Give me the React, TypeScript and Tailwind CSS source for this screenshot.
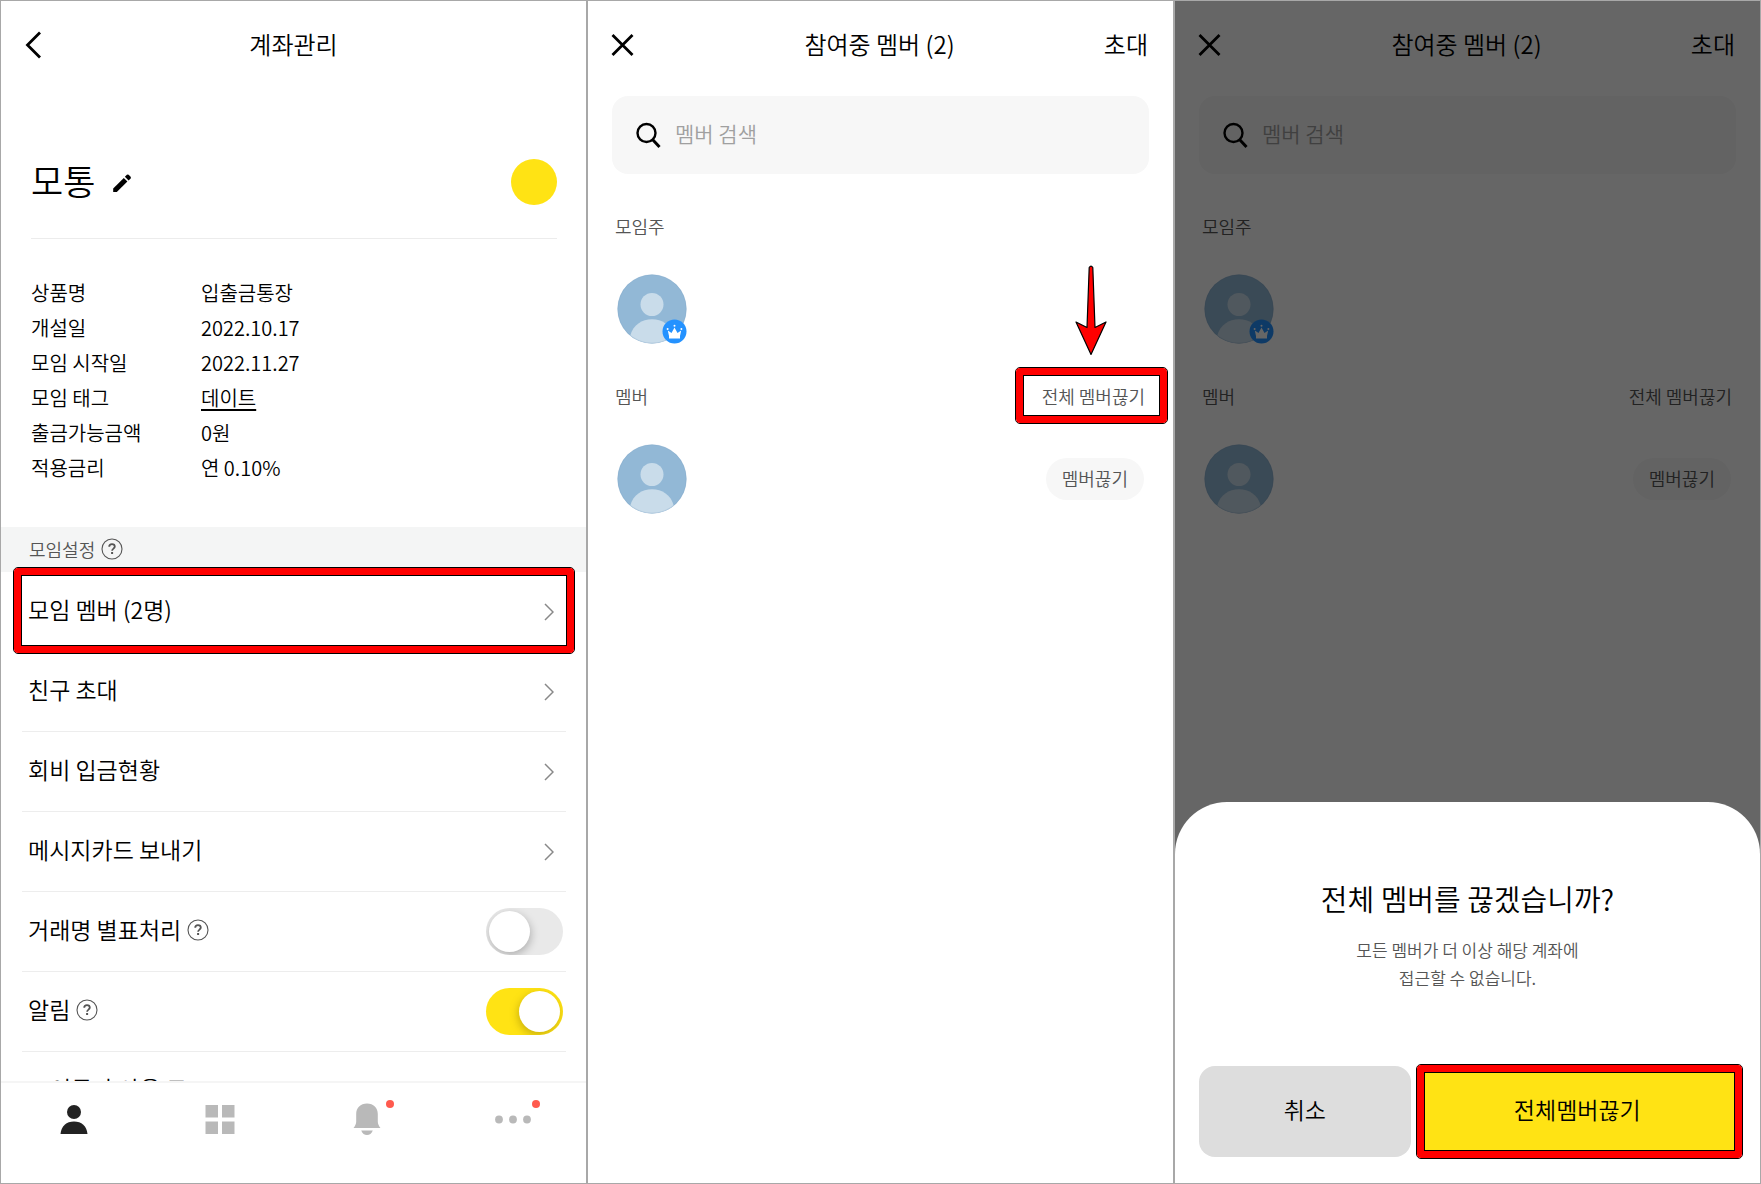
import React, { useState } from 'react';
import clsx from 'clsx';

const details = [
  { label: '상품명', value: '입출금통장' },
  { label: '개설일', value: '2022.10.17' },
  { label: '모임 시작일', value: '2022.11.27' },
  { label: '모임 태그', value: '데이트', link: '#tag' },
  { label: '출금가능금액', value: '0원' },
  { label: '적용금리', value: '연 0.10%' },
];

const links = [
  { text: '모임 멤버 (2명)', highlighted: true },
  { text: '친구 초대' },
  { text: '회비 입금현황' },
  { text: '메시지카드 보내기' },
];

function Highlight({ className, children }: { className: string; children?: React.ReactNode }) {
  return (
    <span
      aria-hidden="true"
      className={clsx('pointer-events-none absolute rounded-[5px] border border-black', className)}
    >
      <span className="absolute inset-0 rounded-[4px] border-[7px] border-[#ff0000]" />
      <span className="absolute inset-[7px] border border-black" />
      {children}
    </span>
  );
}

function ArrowDown() {
  return (
    <svg
      className="absolute bottom-full left-1/2 mb-3 -translate-x-1/2"
      width="32"
      height="91"
      viewBox="0 0 32 91"
    >
      <path
        d="M14.2 2.5q1.8-2.6 3.6 0L20 62.5 31 57 16 89.5 1 57l11 5.5z"
        fill="#ff0000"
        stroke="#000"
        strokeWidth="1.2"
        strokeLinejoin="round"
      />
    </svg>
  );
}

function HelpButton() {
  return (
    <button type="button" aria-label="도움말" className="text-[#555]">
      <svg width="22" height="22" viewBox="0 0 22 22" fill="none" stroke="currentColor">
        <circle cx="11" cy="11" r="10" strokeWidth="1.1" />
        <path d="M8.2 8.8c0-1.7 1.2-2.7 2.8-2.7s2.8 1 2.8 2.5c0 2-2.7 2.1-2.7 4.2" strokeWidth="1.8" />
        <path d="M11.1 14v2" strokeWidth="2" />
      </svg>
    </button>
  );
}

function ToggleRow({ id, text, initial }: { id: string; text: string; initial: boolean }) {
  const [checked, setChecked] = useState(initial);

  return (
    <li className="flex h-20 items-center border-b border-[#ededed] pr-[3px] pl-[6px]">
      <div className="flex items-center gap-1.5 pb-1">
        <label htmlFor={id} className="text-[23px]">
          {text}
        </label>
        <HelpButton />
      </div>
      <input
        id={id}
        type="checkbox"
        role="switch"
        checked={checked}
        onChange={(e) => setChecked(e.target.checked)}
        className="ml-auto h-[47px] w-[77px] appearance-none overflow-hidden rounded-full bg-[#e9e9e9] p-[3px] before:block before:size-[41px] before:rounded-full before:bg-white before:shadow-[1px_3px_8px_rgba(0,0,0,0.25)] checked:bg-[#ffe314] checked:before:ml-[30px] checked:before:shadow-[-1px_3px_8px_rgba(120,100,0,0.4)]"
      />
    </li>
  );
}

function Avatar({ owner }: { owner?: boolean }) {
  return (
    <svg width="70" height="70" viewBox="0 0 70 70" role="img" aria-label={owner ? '모임주' : '멤버'}>
      <circle cx="35" cy="35" r="34.5" fill="#92b8d6" />
      <circle cx="35" cy="30.5" r="11.5" fill="#c9dcea" />
      <path d="M13.2 61.8C16 51 25 45.3 35 45.3S54 51 56.8 61.8A34.5 34.5 0 0 1 13.2 61.8z" fill="#c9dcea" />
      <circle cx="35" cy="35" r="34.2" fill="none" stroke="#7fa6c6" strokeOpacity="0.5" strokeWidth="0.6" />
      {owner && (
        <g>
          <circle cx="57.5" cy="57.5" r="12" fill="#2492ff" />
          <g fill="#fff">
            <path d="M52 64.500v-2.500l-1.200-5.500 3.700 2.500 3-5.500 3 5.500 3.700-2.500-1.200 5.500v2.500z" />
            <circle cx="50.6" cy="55" r="1" />
            <circle cx="57.5" cy="51.800" r="1" />
            <circle cx="64.4" cy="55" r="1" />
          </g>
        </g>
      )}
    </svg>
  );
}

function AccountScreen() {
  return (
    <section className="flex min-h-0 flex-col overflow-hidden border border-[#a8a8a8]">
      <div className="min-h-0 flex-1 overflow-hidden">
        <header className="grid h-[86px] grid-cols-[1fr_auto_1fr] items-center px-6">
          <button type="button" aria-label="뒤로" className="pt-0.5">
            <svg width="18" height="28" viewBox="0 0 18 28" fill="none" stroke="#000" strokeWidth="2.8">
              <path d="M15 1.500 2.500 14 15 26.500" />
            </svg>
          </button>
          <h1 className="text-2xl">계좌관리</h1>
        </header>

        <div className="mr-[29px] ml-[30px] mt-[39px] flex h-[113px] items-center border-b border-[#ececec]">
          <h2 className="pb-1 text-[35px]">모통</h2>
          <button type="button" aria-label="이름 수정" className="ml-[17px] pt-0.5">
            <svg width="20" height="20" viewBox="0 0 20 20" fill="#000">
              <path d="M1.200 15.500 11.800 4.900l3.600 3.600L4.800 19.100H1.200z" />
              <path d="m12.900 3.800 2-2q.9-.7 1.700 0l2 2q.7.9 0 1.700l-2 2z" />
            </svg>
          </button>
          <span className="ml-auto size-[46px] rounded-full bg-[#ffe314]" />
        </div>

        <dl className="mx-[30px] mt-9 grid grid-cols-[170px_1fr] text-[20px] leading-[35px]">
          {details.map((item) => (
            <React.Fragment key={item.label}>
              <dt>{item.label}</dt>
              <dd>
                {item.link ? (
                  <a href={item.link} className="underline underline-offset-3">
                    {item.value}
                  </a>
                ) : (
                  item.value
                )}
              </dd>
            </React.Fragment>
          ))}
        </dl>

        <div className="mt-[42px] flex h-[45px] items-center bg-[#f4f5f5] px-7 pb-0.5 text-[#555]">
          <h3 className="mr-1.5 text-lg">모임설정</h3>
          <HelpButton />
        </div>

        <ul className="pr-5 pl-[21px]">
          {links.map((item) => (
            <li key={item.text} className="relative h-20 border-b border-[#ededed]">
              <a href="#menu" className="flex h-full items-center justify-between pr-3 pl-[6px] text-[23px]">
                <span className="pb-1">{item.text}</span>
                <svg width="10" height="18" viewBox="0 0 10 18" fill="none" stroke="#888" strokeWidth="1.5">
                  <path d="m1 1 8 8-8 8" />
                </svg>
              </a>
              {item.highlighted && <Highlight className="-top-[5px] -right-[9px] -bottom-[3px] -left-[9px]" />}
            </li>
          ))}
          <ToggleRow id="mask-name" text="거래명 별표처리" initial={false} />
          <ToggleRow id="alarm" text="알림" initial />
          <li className="flex h-20 items-center pb-2 pl-7 text-[23px]">이름과 사용 모드</li>
        </ul>
      </div>

      <nav className="grid h-[102px] shrink-0 grid-cols-4 justify-items-center border-t-2 border-[#f5f5f5] pt-[18px]">
        <a href="#home" aria-label="홈" className="h-[37px]">
          <svg width="28" height="37" viewBox="0 0 28 37" fill="#222">
            <circle cx="14" cy="11" r="7" />
            <path d="M.5 33C1.200 25 6.500 20.500 14 20.500S26.800 25 27.500 33z" />
          </svg>
        </a>
        <a href="#services" aria-label="서비스" className="h-[37px]">
          <svg width="30" height="37" viewBox="0 0 30 37" fill="#b9b9b9">
            <path d="M.5 4h12.500v12.500H.5zM17 4h12.500v12.500H17zM.5 20.500h12.500V33H.5zM17 20.500h12.500V33H17z" />
          </svg>
        </a>
        <a href="#alarm" aria-label="알림" className="relative h-[37px]">
          <svg width="28" height="37" viewBox="0 0 28 37" fill="#b9b9b9">
            <path d="M14 2.500c6.500 0 10.800 4.300 10.800 10.500v7.500c0 2.500 1 4.300 2.700 6.500H.5c1.700-2.200 2.700-4 2.700-6.500V13C3.200 6.800 7.500 2.500 14 2.500zM8.200 29.500h11.600c-1.200 3-3.200 4.500-5.800 4.500s-4.600-1.500-5.800-4.500z" />
          </svg>
          <span className="absolute -top-px -right-[13px] size-2 rounded-full bg-[#ff5a4e]" />
        </a>
        <a href="#more" aria-label="더보기" className="relative h-[37px]">
          <svg width="36" height="37" viewBox="0 0 36 37" fill="#b9b9b9">
            <circle cx="4" cy="18.500" r="3.900" />
            <circle cx="18" cy="18.500" r="3.900" />
            <circle cx="32" cy="18.500" r="3.900" />
          </svg>
          <span className="absolute -top-px -right-[9px] size-2 rounded-full bg-[#ff5a4e]" />
        </a>
      </nav>
    </section>
  );
}

function MemberScreen({ highlighted, children }: { highlighted?: boolean; children?: React.ReactNode }) {
  return (
    <section className="relative overflow-hidden border border-[#a8a8a8]">
      <header className="grid h-[86px] grid-cols-[1fr_auto_1fr] items-center pr-[25px] pl-[23px] text-2xl">
        <button type="button" aria-label="닫기" className="pt-0.5">
          <svg width="23" height="22" viewBox="0 0 23 22" fill="none" stroke="#000" strokeWidth="2.800">
            <path d="m1.500 1 20 20M21.500 1l-20 20" />
          </svg>
        </button>
        <h1>참여중 멤버 (2)</h1>
        <button type="button" className="justify-self-end">
          초대
        </button>
      </header>

      <label className="mx-6 mt-[9px] flex h-[78px] items-center rounded-2xl bg-[#f7f7f7] px-6">
        <svg width="25" height="27" viewBox="0 0 25 27" fill="none" stroke="#000" strokeWidth="2.400">
          <circle cx="10.500" cy="11" r="9" />
          <path d="m16.500 17.500 7 7.500" strokeWidth="3" />
        </svg>
        <input
          type="search"
          aria-label="멤버 검색"
          placeholder="멤버 검색"
          className="ml-3.5 min-w-0 flex-1 bg-transparent pb-0.5 text-[21px] outline-none placeholder:text-[#a0a0a0]"
        />
      </label>

      <h2 className="mt-8 px-[27px] text-lg leading-10 text-[#555]">모임주</h2>
      <div className="mt-7 px-[29px]">
        <Avatar owner />
      </div>

      <div className="mt-8 flex justify-between pr-7 pl-[27px] text-lg leading-10 text-[#555]">
        <h2>멤버</h2>
        <button type="button" className="relative">
          전체 멤버끊기
          {highlighted && (
            <Highlight className="-top-[9px] -right-[23px] -bottom-2 -left-[27px]">
              <ArrowDown />
            </Highlight>
          )}
        </button>
      </div>
      <div className="mt-7 flex items-center justify-between px-[29px]">
        <Avatar />
        <button type="button" className="h-[42px] rounded-full bg-[#f7f7f7] px-4 pb-0.5 text-lg text-[#555]">
          멤버끊기
        </button>
      </div>

      {children}
    </section>
  );
}

function ConfirmSheet() {
  return (
    <div className="absolute inset-0 flex items-end bg-black/60">
      <div
        role="dialog"
        aria-labelledby="sheet-title"
        className="w-full rounded-t-[52px] bg-white px-6 pt-[76px] pb-[26px] text-center"
      >
        <h2 id="sheet-title" className="text-[29px] leading-10">
          전체 멤버를 끊겠습니까?
        </h2>
        <p className="mt-[18px] text-[17px] leading-7 text-[#555]">
          모든 멤버가 더 이상 해당 계좌에
          <br />
          접근할 수 없습니다.
        </p>
        <div className="mt-[74px] grid h-[91px] grid-cols-[2fr_3fr] gap-2 text-[23px]">
          <button type="button" className="rounded-2xl bg-[#ddd] pb-1">
            취소
          </button>
          <button type="button" className="relative bg-[#ffe314] pb-1">
            전체멤버끊기
            <Highlight className="-top-[2px] -right-[7px] -bottom-[2px] -left-[3px]" />
          </button>
        </div>
      </div>
    </div>
  );
}

export default function App() {
  return (
    <main className="grid h-screen grid-cols-3 bg-white font-['Noto_Sans_CJK_KR',sans-serif] font-[350] text-black">
      <AccountScreen />
      <MemberScreen highlighted />
      <MemberScreen>
        <ConfirmSheet />
      </MemberScreen>
    </main>
  );
}
